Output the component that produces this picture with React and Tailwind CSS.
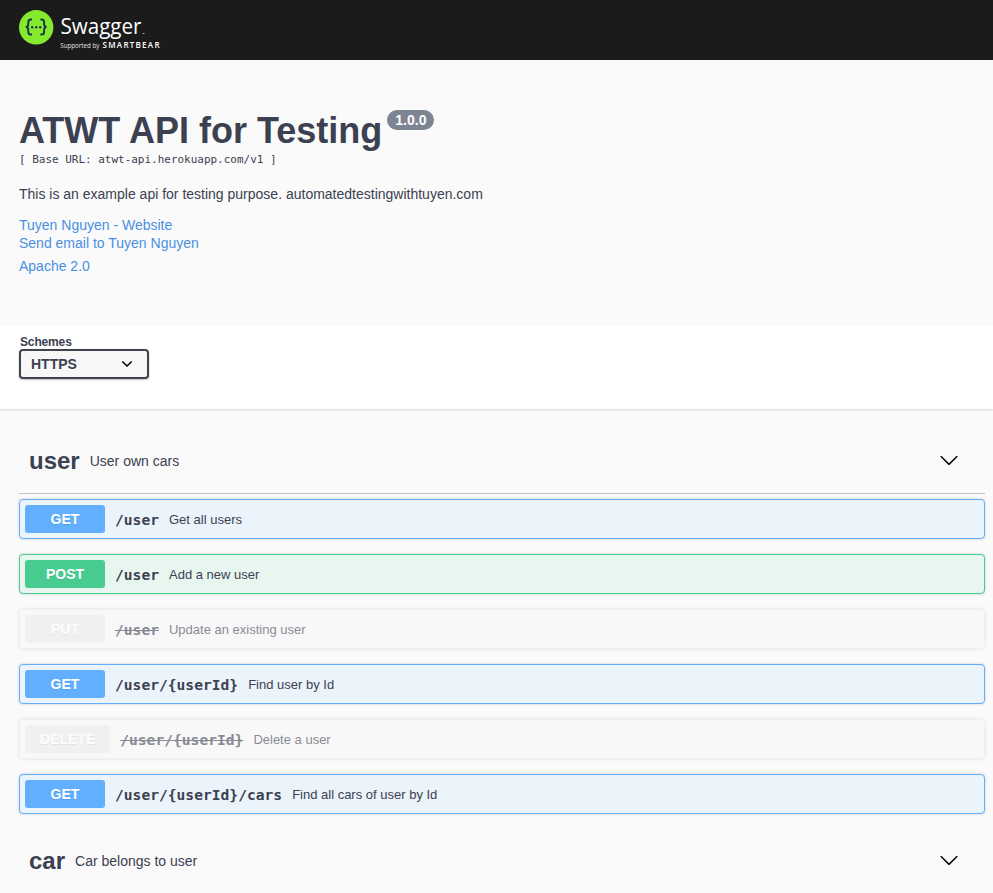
const sans = "font-['Liberation_Sans',Arial,sans-serif]";
const mono = "font-['DejaVu_Sans_Mono',monospace]";

const operations = [
  { method: 'GET', path: '/user', summary: 'Get all users' },
  { method: 'POST', path: '/user', summary: 'Add a new user' },
  { method: 'PUT', path: '/user', summary: 'Update an existing user', deprecated: true },
  { method: 'GET', path: '/user/{userId}', summary: 'Find user by Id' },
  { method: 'DELETE', path: '/user/{userId}', summary: 'Delete a user', deprecated: true },
  { method: 'GET', path: '/user/{userId}/cars', summary: 'Find all cars of user by Id' },
];

const boxStyles = {
  GET: 'border-[#61affe] bg-[#ebf3fb]',
  POST: 'border-[#49cc90] bg-[#e8f6f0]',
};

const badgeStyles = {
  GET: 'bg-[#61affe]',
  POST: 'bg-[#49cc90]',
};

function Logo() {
  return (
    <svg width="150" height="44" viewBox="0 0 150 44" className="block">
      <circle cx="17.2" cy="19.3" r="17.2" fill="#85ea2d" />
      <g fill="none" stroke="#173647" strokeWidth="1.9">
        <path d="M13 11.500h-1.200c-1.800 0-2.500.900-2.500 2.600v2c0 1.900-.8 2.900-2.500 2.900 1.700 0 2.500 1 2.500 2.900v2c0 1.700.7 2.600 2.500 2.600H13" />
        <path d="M21.400 11.500h1.200c1.800 0 2.500.9 2.500 2.600v2c0 1.900.8 2.900 2.500 2.900-1.700 0-2.500 1-2.500 2.900v2c0 1.700-.7 2.600-2.500 2.600h-1.200" />
      </g>
      <g fill="#173647">
        <circle cx="13.200" cy="19.200" r="1.200" />
        <circle cx="17.200" cy="19.200" r="1.200" />
        <circle cx="21.200" cy="19.200" r="1.200" />
      </g>
      <text x="41.500" y="26.300" fill="#fff" fontFamily="Open Sans, sans-serif" fontSize="22.500" textLength="81" lengthAdjust="spacingAndGlyphs">Swagger</text>
      <rect x="123.500" y="25" width="2" height="1" fill="#aaa" />
      <text x="41.300" y="40" fill="#e5e5e5" fontFamily="Open Sans, sans-serif" fontSize="6.500" textLength="39" lengthAdjust="spacingAndGlyphs">Supported by</text>
      <text x="83.500" y="40" fill="#fff" fontFamily="Open Sans, sans-serif" fontWeight="600" fontSize="8" textLength="57" lengthAdjust="spacing">SMARTBEAR</text>
    </svg>
  );
}

function Chevron() {
  return (
    <svg width="20" height="20" viewBox="0 0 20 20" className="mb-0.5 block">
      <path d="M17.418 6.109c.272-.268.709-.268.979 0s.271.701 0 .969l-7.908 7.830c-.270.268-.707.268-.979 0l-7.908-7.830c-.270-.268-.270-.701 0-.969.271-.268.709-.268.979 0L10 13.250z" />
    </svg>
  );
}

function TagHeader({ name, description }) {
  return (
    <div className="flex h-16 items-center border-b border-[#3b4151]/30 pb-0.5 pl-2.5 pr-[26px]">
      <h3 className="text-2xl font-bold leading-7">{name}</h3>
      <span className="flex-1 pl-2.5 text-sm">{description}</span>
      <Chevron />
    </div>
  );
}

function Operation({ method, path, summary, deprecated }) {
  const box = deprecated ? 'border-[#ebebeb] bg-[#ebebeb]/10 opacity-60' : boxStyles[method];
  const badge = deprecated ? 'bg-[#ebebeb]' : badgeStyles[method];
  return (
    <div className={`flex h-10 items-center rounded border p-[5px] shadow-[0_0_3px_rgba(0,0,0,0.19)] ${box}`}>
      <span className={`flex h-7 min-w-20 items-center justify-center rounded-[3px] px-[15px] text-sm font-bold text-white [text-shadow:0_1px_0_rgba(0,0,0,0.1)] ${badge}`}>
        {method}
      </span>
      <span className={`px-2.5 pt-0.5 text-[14.62px] font-bold leading-5 ${mono} ${deprecated ? 'line-through' : ''}`}>{path}</span>
      <span className="pt-0.5 text-[13px] leading-5">{summary}</span>
    </div>
  );
}

export default function App() {
  return (
    <div className={`h-[893px] overflow-hidden bg-[#fafafa] text-[#3b4151] ${sans}`}>
      <header className="h-[60px] bg-[#1b1b1b] pl-[19px] pt-2">
        <Logo />
      </header>

      <section className="h-[265px] pl-[19px] pt-[50px]">
        <div className="flex items-start">
          <h1 className="text-[36px] font-bold leading-[41px]">ATWT API for Testing</h1>
          <span className="ml-[5px] flex h-5 items-center rounded-full bg-[#7d8492] px-2 text-sm font-bold text-white">1.0.0</span>
        </div>
        <div className={`pt-px text-[10.97px] leading-4 ${mono}`}>[ Base URL: atwt-api.herokuapp.com/v1 ]</div>
        <p className="mt-[17px] text-sm leading-[18px]">This is an example api for testing purpose. automatedtestingwithtuyen.com</p>
        <div className="mt-[13px] flex flex-col text-sm leading-[18px] text-[#4990e2]">
          <a>Tuyen Nguyen - Website</a>
          <a>Send email to Tuyen Nguyen</a>
          <a className="mt-[5px]">Apache 2.0</a>
        </div>
      </section>

      <section className="h-[84px] bg-white pl-[19px] pt-[10px] shadow-[0_1px_2px_rgba(0,0,0,0.15)]">
        <div className="pl-px text-xs font-bold leading-[14px] tracking-[-0.15px]">Schemes</div>
        <div className="flex h-[30px] w-[130px] items-center justify-between rounded border-2 border-[#41444e] bg-[#f7f7f7] pl-2.5 pr-[14px] text-sm font-bold shadow-[0_1px_2px_rgba(0,0,0,0.25)]">
          <span>HTTPS</span>
          <svg width="12" height="8" viewBox="0 0 12 8" fill="none" stroke="#000" strokeWidth="1.6">
            <path d="M1.300 1.500 6 6l4.700-4.500" />
          </svg>
        </div>
      </section>

      <main className="pl-[19px] pr-2 pt-[21px]">
        <TagHeader name="user" description="User own cars" />
        <div className="flex flex-col gap-[15px] pb-4 pt-[5px]">
          {operations.map((op) => (
            <Operation key={op.method + op.path} {...op} />
          ))}
        </div>
        <TagHeader name="car" description="Car belongs to user" />
      </main>
    </div>
  );
}
